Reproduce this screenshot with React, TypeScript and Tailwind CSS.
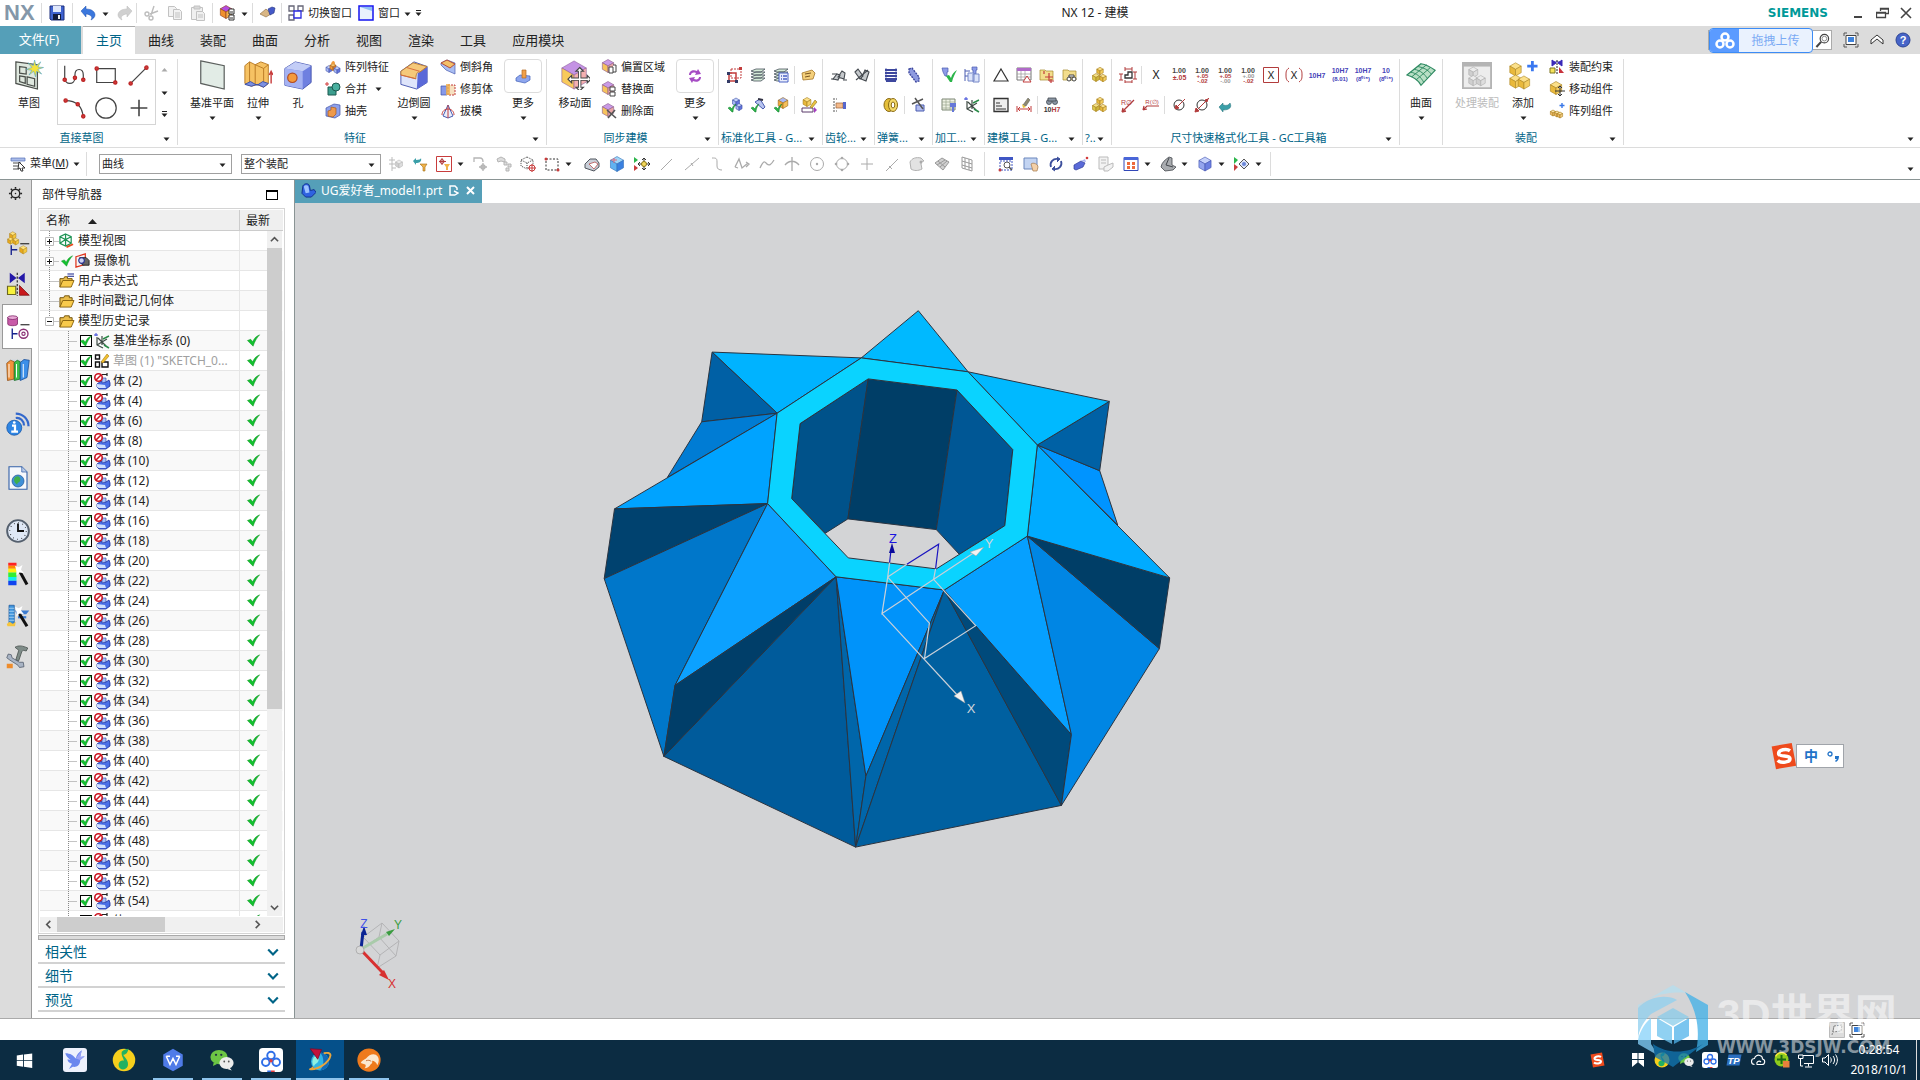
import React, { useState } from 'react';
import { clsx } from 'clsx';

type Dict = Record<string, React.ReactNode>;

/* ---------- drawing helpers ---------- */

function Cube({ x, y, s, c = ['#fbe08a', '#e9b93c', '#f4ce62'], k = '#a8801c' }: { x: number; y: number; s: number; c?: string[]; k?: string }) {
  const w = s * 0.87;
  const h = s / 2;
  return (
    <g transform={`translate(${x} ${y})`} stroke={k} strokeWidth="0.6" strokeLinejoin="round">
      <polygon points={`0,${-s} ${w},${-h} 0,0 ${-w},${-h}`} fill={c[0]} />
      <polygon points={`${-w},${-h} 0,0 0,${s} ${-w},${h}`} fill={c[1]} />
      <polygon points={`${w},${-h} 0,0 0,${s} ${w},${h}`} fill={c[2]} />
    </g>
  );
}

const BLUE = ['#c3d2fa', '#a7b7f3', '#6273dd'];
const PURPLE = ['#c99ae6', '#f6c35c', '#e9a6a6'];
const GREY = ['#ececec', '#cfcfcf', '#dedede'];
const GOLD = ['#ffe27a', '#e8a81c', '#f6c83c'];
const PEACH = ['#fbe0a0', '#efb968', '#f4ca80'];
const tick = <path d="M0.5 8 4.5 6.500l2.500 3C9 5 11 3 15.500 1 12 5 9.500 9 7.500 15Z" fill="#12c22e" stroke="#0b8a1f" strokeWidth="0.6" />;
const smallTick = <path d="m1 11 2-1 2 2c1-3 2-4 4-5-2 3-3 5-3 8L5 15z" fill="#2bb54a" stroke="#127a2c" strokeWidth="0.5" />;

const dimText = (a: string, b: string, c: string, color = '#b23c3c', color2 = color) => (
  <g fontFamily="Liberation Sans" fontSize="7" fontWeight="bold" textAnchor="middle">
    <text x="8" y="6" fill="#444">{a}</text>
    <text x="8.5" y={c ? 11 : 13} fontSize={c ? 6 : 7} fill={color}>{b}</text>
    <text x="8.5" y="16" fontSize="6" fill={color2}>{c}</text>
  </g>
);

const fitText = (a: string, b: string) => (
  <g fontFamily="Liberation Sans" fontSize="7" fontWeight="bold" textAnchor="middle" fill="#4543b8">
    <text x="8" y={b ? 6 : 11}>{a}</text>
    <text x="8" y="14" fontSize="6">{b}</text>
  </g>
);

/* 16 x 16 icons */
const small: Dict = {
  save: (<><path d="M1 1h14v14H2L1 14z" fill="#3e62cf" stroke="#1d2f7c" /><path d="M4 1h8v6H4z" fill="#dfe7fb" /><path d="M4 9h8v6H4z" fill="#111a3c" /><path d="M9 10h2v4H9z" fill="#eee" /></>),
  undo: <path d="M1 6 6 1v3c6 0 9 3 9 6 0 2-2 4-4 5 1-2 1-3 0-4S8 9 6 9v3z" fill="#3b77dd" stroke="#2353ae" strokeWidth="0.5" />,
  redo: <path d="m15 6-5-5v3c-6 0-9 3-9 6 0 2 2 4 4 5-1-2-1-3 0-4s3-2 5-2v3z" fill="#d0d0d0" stroke="#bbb" strokeWidth="0.5" />,
  cut: (<g stroke="#bdbdbd" fill="none" strokeWidth="1.4"><path d="m10 1-3 9M14 6 6 9" /><circle cx="3" cy="9" r="2" /><circle cx="7" cy="13" r="2" /></g>),
  copy: (<g stroke="#c2c2c2" fill="#f2f2f2"><path d="M1.5 1.5h6l2 2v8h-8z" /><path d="M6.5 4.5h6l2 2v8h-8z" /><path d="M8 8h5M8 10h5M8 12h5" /></g>),
  paste: (<g stroke="#c2c2c2" fill="#f0f0f0"><path d="M1.5 2.5h11v12h-11z" /><path d="M4 1h6v3H4z" fill="#d8d8d8" /><path d="M6.5 6.5h6l2 2v7h-8z" /><path d="M8 10h5M8 12h5" /></g>),
  repeat: (<><Cube x={7} y={7} s={6.5} c={['#b44ce0', '#f0902e', '#f4b04c']} k="#8a3a1c" /><path d="M10 4h5v5h-5zM10 10h5v5h-5z" fill="#fff" stroke="#333" /><path d="M11 7h3M11 13h3" stroke="#333" /></>),
  brush: (<><path d="M1 9 7 4l5 5-5 3z" fill="#d9b684" stroke="#8a6a3c" strokeWidth="0.6" /><path d="m9 4 4-2 3 1-1 5-4 2z" fill="#4459c8" stroke="#26347e" strokeWidth="0.6" /></>),
  switchWin: (<g fill="#fff" strokeWidth="1.3"><path d="M1 1h5v5H1zM10 1h5v5h-5zM1 10h5v5H1z" stroke="#667" /><path d="M6 6h7v7H6z" stroke="#2a2ae0" /></g>),
  win: (<><path d="M1 1h14v14H1z" fill="#e9f1fd" stroke="#1414f0" strokeWidth="1.5" /><path d="m2 2 12 0v4z" fill="#8fc0f4" /></>),
  pattern: (<><Cube x={4} y={10} s={3.5} c={BLUE} k="#4a5cb0" /><Cube x={8} y={8} s={3.5} c={['#f8c46a', '#ee9c3c', '#e07e22']} k="#a2601c" /><Cube x={12} y={11} s={3.5} c={BLUE} k="#4a5cb0" /><path d="M6 5c1-4 4-4 4 0" fill="#ee9c3c" /></>),
  unite: (<><path d="M3 6h8v8H3z" fill="#3c9e8e" stroke="#1d5a50" /><circle cx="11" cy="6" r="4" fill="#49b09f" stroke="#1d5a50" /><path d="M2 1v4M0 3h4" stroke="#d23b3b" /></>),
  shell: (<><path d="m1 5 8-4 6 1v10l-5 3-9-2z" fill="#8ea0ea" stroke="#3f53a8" strokeWidth="0.7" /><path d="m3 8 3-1V4l5 1v6l-3 3-5-1z" fill="#ee9a4c" stroke="#a85a1c" strokeWidth="0.7" /></>),
  chamfer: (<><path d="m1 4 6-3 8 3v11l-9-4-5-5z" fill="#a9bdf2" stroke="#4a5cb0" strokeWidth="0.7" /><path d="m1 4 6-3 8 4-5 4z" fill="#f3c069" stroke="#b54e3a" /></>),
  trim: (<><path d="M1 5h6v9H1z" fill="#8799e8" stroke="#3f53a8" strokeWidth="0.7" /><path d="M8 4h7v10H8z" fill="#f6e0c0" stroke="#c23c3c" strokeDasharray="2 1" /><path d="M6 3h4v11H6z" fill="#f0b04c" opacity="0.8" /></>),
  draft: (<><path d="m3 13 5-11 5 11-5 2z" fill="#e9eefb" stroke="#4a5cb0" /><path d="M8 2v13" stroke="#c23c3c" /><path d="M2 12C2 4 14 4 14 12" fill="none" stroke="#c23c3c" /></>),
  offset: (<><Cube x={7} y={7} s={6.5} c={PURPLE} k="#8a5a8c" /><path d="M8 8h4v6H8zM12 6h3v7h-3" fill="#fff" stroke="#444" /></>),
  replace: (<><Cube x={7} y={7} s={6.5} c={PURPLE} k="#8a5a8c" /><path d="M9 6h5v4H9zM9 11h5v4H9z" fill="#fff" stroke="#444" /></>),
  remove: (<><Cube x={7} y={7} s={6.5} c={PURPLE} k="#8a5a8c" /><path d="m6 7 9 8M14 7l-7 8" stroke="#555" strokeWidth="1.6" /></>),
  moreFeature: (<><path d="m1 10 4-3 10 1v4l-5 3-9-2z" fill="#8ea6ee" stroke="#3f5fb8" strokeWidth="0.7" /><path d="M7 2h4v8H7z" fill="#f0a04a" stroke="#b56a22" strokeWidth="0.7" /></>),
  moreSync: (<g fill="#a64cc4"><path d="M2 7c0-4 4-6 8-4l1-2 3 5-6 1 1-2C6 4 4 5 4 7z" /><path d="M14 9c0 4-4 6-8 4l-1 2-3-5 6-1-1 2c3 1 5 0 5-2z" /></g>),
  gcA: (<g fill="none"><path d="M4 2h10v9H4z" stroke="#c23c3c" strokeDasharray="2 1" /><path d="M2 6h7v8H2z" stroke="#c23c3c" strokeWidth="1.5" /><path d="M0 5h3v3H0zM0 13h3v3H0zM8 13h3v3H8z" fill="#333a66" /><path d="M12 0h3v3h-3z" fill="#c23c3c" /></g>),
  layers: (<g fill="#d5ebd8" stroke="#46505a" strokeWidth="0.8"><path d="m1 13 5-2h9l-4 3H4zM1 10l5-2h9l-4 3H4zM1 7l5-2h9l-4 3H4zM1 4l5-2h9l-4 3H4z" /></g>),
  layers2: (<><g fill="#d5ebd8" stroke="#46505a" strokeWidth="0.8"><path d="m1 13 5-2h9l-4 3H4zM1 10l5-2h9l-4 3H4zM1 7l5-2h9l-4 3H4zM1 4l5-2h9l-4 3H4z" /></g><path d="M6 6h9v9H6z" fill="#e9edfb" stroke="#4a62c4" /><path d="M8 9h1m1 0h4M8 12h1m1 0h4" stroke="#4a62c4" strokeWidth="1.3" /></>),
  tag: (<><path d="m1 6 10-3 3 3-2 6-10 1z" fill="#f4cf7a" stroke="#a5762a" strokeWidth="0.8" /><path d="m4 7 6-1M4 10l5-1" stroke="#7a5520" /></>),
  okBlue: (<><Cube x={9} y={5} s={4} c={BLUE} k="#3f53a8" /><Cube x={12} y={10} s={3.5} c={BLUE} k="#3f53a8" />{smallTick}</>),
  okPen: (<><path d="m5 5 5-3 5 8-2 2z" fill="#b8c4f0" stroke="#4a5cb0" /><path d="m8 2 5 1" stroke="#334" strokeWidth="2" />{smallTick}</>),
  okBox: (<><Cube x={10} y={6} s={5.5} c={['#aabaf4', '#f3a83c', '#f5c05a']} k="#9a6a1c" />{smallTick}</>),
  boxPen: (<><Cube x={6} y={5} s={4.5} /><path d="M1 11h11v4H1z" fill="#fff" stroke="#5b3a6b" /><path d="m9 10 5-7 2 2-5 6z" fill="#e9c23f" stroke="#7c5c10" strokeWidth="0.5" /><path d="m13 10 3 3-3 3z" fill="#a63ec0" /></>),
  gearA: (<g stroke="#454a50" strokeWidth="1.1" fill="#c5c9cc"><path d="m2 12 4-5 3 1-2 5zM7 10l4-6 3 2-1 6z" /><path d="M1 7h5M0 12h3M12 13h4" /></g>),
  gearB: (<g stroke="#454a50" strokeWidth="1.1" fill="#c5c9cc"><path d="m1 5 3-3 5 7-3 3zM7 12l4-9 4 2-3 9z" /><path d="M2 13 14 3" /></g>),
  gearHand: (<><path d="M2 2h4M2 5h3M2 8h4M2 11h3M2 14h4" stroke="#555" strokeDasharray="2 1" /><path d="M5 6h7v5H5z" fill="#f3b98a" stroke="#99623a" strokeWidth="0.7" /><path d="M12 5h3v7h-3z" fill="#5666cc" /></>),
  spring: (<g stroke="#3d479e" strokeWidth="2" fill="none"><path d="M2 3h12M2 6h12M2 9h12M2 12h12M3 14h10" /><path d="M3 1v13M13 1v13" strokeWidth="0.7" /></g>),
  springB: (<path d="m3 2 3-1 7 9v4l-3 1-7-9z" fill="#8f9be0" stroke="#3d479e" strokeWidth="1.4" strokeDasharray="2 1" />),
  ring: (<><ellipse cx="6" cy="8" rx="5" ry="6.5" fill="#e4bf3a" stroke="#8a6a14" /><ellipse cx="10" cy="8" rx="4.5" ry="6.5" fill="#f4d968" stroke="#8a6a14" /><ellipse cx="10" cy="8" rx="1.8" ry="3" fill="#fff" stroke="#8a6a14" /></>),
  cutSpring: (<><path d="M5 8h8v6H5z" fill="#b3bdf0" stroke="#4a5cb0" /><path d="m4 1 8 11M1 7l11-5" stroke="#555" strokeWidth="1.5" /></>),
  machine: (<><path d="M1 1h6v4H6v4H4L2 5z" fill="#8d9be8" stroke="#4a5cb0" strokeWidth="0.7" /><path d="m5 9 3-1 2 3c1-4 3-6 6-8-2 4-4 7-5 12H9z" fill="#2bb54a" /></>),
  machineB: (<><path d="M8 0h5v3h-1v4h-3V3H8z" fill="#8d9be8" stroke="#4a5cb0" strokeWidth="0.7" /><path d="M1 2v12M1 4h5M1 9h5" stroke="#4a5cb0" /><path d="M4 6h6v8H4zM9 7h6v8H9z" fill="#dce4fa" stroke="#7788c8" /></>),
  gridM: (<><path d="M1 2h13v11H1z" fill="#eef1e4" stroke="#7c8774" /><path d="M1 5h13M1 8h13M1 11h13M5 2v11M9 2v11" stroke="#9aa58c" strokeWidth="0.7" /><path d="M9 6h6v4h-2v5h-2v-5H9z" fill="#6678d8" /></>),
  csys: (<g fill="none" stroke="#3e4a44"><path d="M3 4v8l6 3M3 12l10-6M4 5l8 8M8 3v9" strokeWidth="1.2" /><path d="m9 6 6-3M10 12l5 3" stroke="#2a8a48" strokeWidth="1.5" /><path d="M2 0v3M0 2h4" stroke="#3a48d8" /></g>),
  triangle: <path d="M8 2 15 14H1z" fill="none" stroke="#333" strokeWidth="1.2" />,
  table: (<><path d="M1 1h14v12H1z" fill="#fff" stroke="#777" /><path d="M1 1h14v3H1z" fill="#b06ac8" /><path d="M1 7h14M1 10h14M5 4v9M9 4v9" stroke="#999" strokeWidth="0.7" /><path d="m11 9 4 6H7z" fill="#fff" stroke="#c23c3c" /></>),
  folderPlus: (<><path d="M1 3h5l1 1h7v9H1z" fill="#f3dd8c" stroke="#a5882a" strokeWidth="0.7" /><path d="M10 6v8M6 10h8M5 4v3M12 12v4M10 14h5" stroke="#c23c3c" strokeWidth="1.2" /></>),
  folderSee: (<><path d="M1 3h5l1 1h7v9H1z" fill="#f3dd8c" stroke="#a5882a" strokeWidth="0.7" /><g fill="#fff" stroke="#444"><circle cx="7" cy="12" r="2" /><circle cx="12" cy="12" r="2" /><path d="M7 8h5v2H7z" /></g></>),
  note: (<><path d="M1 1.5h14v13H1z" fill="#eee" stroke="#333" strokeWidth="1.3" /><path d="M3 6h4M3 9h6M3 12h10" stroke="#333" /></>),
  dimBrush: (<><path d="m7 8 5-7 2 2-4 6z" fill="#8e8a70" stroke="#555" strokeWidth="0.5" /><path d="m6 7 4 3-3 1z" fill="#e8c23c" /><path d="M1 9v6M15 9v6M2 12h12m-10-2-2 2 2 2m8-4 2 2-2 2" stroke="#c23c3c" fill="none" /></>),
  find: (<><g fill="#8a96a4" stroke="#444a52" strokeWidth="0.8"><circle cx="5" cy="5" r="2.5" /><circle cx="11" cy="5" r="2.5" /><path d="M4 1h8v3H4z" /></g><text x="8" y="15" textAnchor="middle" fontSize="7" fontWeight="bold" fontFamily="Liberation Sans" fill="#333">10<tspan fill="#b23c3c">H7</tspan></text></>),
  boxes: (<><Cube x={9} y={4} s={3.7} /><Cube x={5} y={10.5} s={4} c={['#f4e28a', '#d9c84a', '#cdb53c']} /><Cube x={12} y={11} s={3.7} /></>),
  dimA: (<g stroke="#b23c3c" fill="none"><path d="M5 2h7M5 0v4M12 0v4M1 7v6M-1 7h4M-1 13h4M15 5v7M13 5h4M13 12h4M5 15h7M5 13v3M12 13v3" /><path d="M5 11V8h3V5h4v6z" stroke="#333" strokeWidth="1.3" /></g>),
  x: (<text x="8" y="12" textAnchor="middle" fontSize="12" fontFamily="Noto Sans" fill="#222">X</text>),
  d1: dimText('1.00', '±.05', ''),
  d2: dimText('1.00', '+.05', '-.02'),
  d3: dimText('1.00', '+.05', '-.00', '#b23c3c', '#999'),
  d4: dimText('1.00', '+.00', '-.02', '#999', '#b23c3c'),
  xBox: (<><path d="M0.5 0.5h15v15h-15z" fill="none" stroke="#b23c3c" /><text x="8" y="12" textAnchor="middle" fontSize="11" fontFamily="Noto Sans" fill="#222">X</text></>),
  xParen: (<><path d="M3 1C0 3 0 5 0 8s0 5 3 7M13 1c3 2 3 4 3 7s0 5-3 7" fill="none" stroke="#b23c3c" /><text x="8" y="12" textAnchor="middle" fontSize="11" fontFamily="Noto Sans" fill="#222">X</text></>),
  f1: fitText('10H7', ''),
  f2: fitText('10H7', '(8.01)'),
  f3: fitText('10H7', '(8⁰¹⁵)'),
  f4: fitText('10', '(8⁰¹⁵)'),
  rad: (<><path d="m2 15 12-12M2 15l1-4M2 15l4-1" stroke="#b23c3c" strokeWidth="1.3" fill="none" /><text x="1" y="8" fontSize="7" fontFamily="Liberation Sans" fill="#b23c3c">R∅</text></>),
  rad2: (<><path d="m0 13 4-4h12M0 13l1-4M0 13l4-1" stroke="#b23c3c" strokeWidth="1.2" fill="none" /><text x="9" y="7" textAnchor="middle" fontSize="6" fontFamily="Liberation Sans" fill="#b23c3c">R(∅)</text></>),
  dia: (<><circle cx="8" cy="8" r="5" fill="none" stroke="#333" /><path d="m4 12 10-10M4 12l4-1-3-3z" stroke="#b23c3c" fill="#b23c3c" /></>),
  dia2: (<><circle cx="8" cy="8" r="5" fill="none" stroke="#333" /><path d="M1 15 15 1M1 15l4-1-3-3zM14 2l-3 1 2 2z" stroke="#b23c3c" fill="#b23c3c" /></>),
  back: (<path d="m2 10 4-4v2c4 1 6 0 7-2 2 4 0 7-7 7v2z" fill="#3a9fa8" stroke="#1f6a72" strokeWidth="0.5" />),
  constraint: (<><path d="M3 1v6l4-3zM13 1v6L9 4zM3 3h10" fill="#3a28b8" stroke="#3a28b8" /><path d="M8 1v14" stroke="#222" strokeDasharray="2 1" /><path d="M1 9h5v5H1z" fill="#f4e25c" stroke="#7d7420" /><path d="M10 8v6h5z" fill="#c8323c" /></>),
  moveComp: (<><Cube x={7} y={7} s={6.5} /><path d="M11 5v10M6 10h10M9 7l2-2 2 2M9 13l2 2 2-2" stroke="#333" fill="#fff" /></>),
  patComp: (<><Cube x={4} y={10} s={3} c={PEACH} /><Cube x={8} y={11} s={3} c={PEACH} /><Cube x={11} y={12} s={3} c={PEACH} /><path d="M13 0v5M10.500 2.500h5" stroke="#3a78e8" strokeWidth="1.4" /></>),
  menu: (<><path d="M1 2h14v3H1z" fill="#a9bbe8" stroke="#5570b8" strokeWidth="0.7" /><path d="M3 7h8M3 10h6M3 13h6" stroke="#888" strokeWidth="1.5" /><path d="m9 6 6 6-3 0 1 3-2 0-1-3-2 1z" fill="#fff" stroke="#333" /></>),
  t1: (<g stroke="#bbb" fill="#eee"><path d="M4 1v14M1 4h6M1 8h6M4 12h4" /><Cube x={11} y={8} s={4} c={GREY} k="#bbb" /></g>),
  t2: (<><path d="m1 5 3-3v2c3 0 5-1 5-2 1 4-2 5-5 5v2z" fill="#3a9fa8" /><path d="M8 8h7l-2 3v4h-2v-4z" fill="#f0b34a" stroke="#a36c14" strokeWidth="0.6" /></>),
  t3: (<><path d="M0.5 0.5h15v15h-15z" fill="#fff" stroke="#c83c3c" /><path d="M6 2v7M3 5.500h7" stroke="#b23c3c" /><circle cx="6" cy="5.5" r="2" fill="none" stroke="#b23c3c" /><path d="M8 8h6l-2 3v3h-2v-3z" fill="#f0b34a" /></>),
  t4: (<g stroke="#b5b5b5" fill="none" strokeWidth="1.3"><path d="M2 6V2h6c2 0 3 2 3 4" /><path d="M11 7v8M7 11h8" /><circle cx="11" cy="11" r="2" /></g>),
  t5: (<g stroke="#b5b5b5" fill="#ddd"><path d="M1 3 5 1l4 2v3L5 5 2 6z" /><path d="M8 6h3v3H8zM12 8h3v3h-3zM10 12h3v3h-3z" /></g>),
  t6: (<><path d="m7 1 6 3v6l-6 3-6-3V4zM1 4l6 3 6-3M7 7v6" fill="none" stroke="#444" strokeDasharray="1 1" /><circle cx="12" cy="12" r="3" fill="#fff" stroke="#c83c3c" /><path d="M12 8v8M8 12h8" stroke="#c83c3c" /></>),
  t7: (<><path d="M2 3h12v11H2z" fill="none" stroke="#333" strokeDasharray="2 1.5" /><circle cx="2" cy="3" r="1.5" fill="#c83c3c" /><circle cx="14" cy="14" r="1.5" fill="#c83c3c" /></>),
  t8: (<><path d="m1 8 5-5 6 0 3 4v4l-5 4-9-3z" fill="#c9cfd8" stroke="#50565e" /><path d="m5 8 6-2 3 2-4 5z" fill="#fff" stroke="#b23c3c" strokeWidth="0.7" /></>),
  t9: (<><Cube x={8} y={8} s={7.5} c={['#9fd6f8', '#62b2f0', '#3a80e0']} k="#3370b8" /><path d="M5 2v5M2 4h6" stroke="#e06a7a" /></>),
  t10: (<><path d="m0 1 4 3-4 3z" fill="#2bb54a" /><path d="m0 9 4 3-4 3z" fill="#c83c3c" /><path d="M10 2v12M4 8h12M8 4l2-2 2 2M8 12l2 2 2-2M6 6 4 8l2 2M14 6l2 2-2 2" stroke="#333" fill="none" /><circle cx="10" cy="8" r="2.5" fill="#f4d95c" stroke="#8a7414" /></>),
  t11: <path d="M2 14 13 3" stroke="#aaa" />,
  t12: <path d="M1 14 15 2M7 7l2 3" stroke="#aaa" />,
  t13: <path d="M3 2c4 0 5 0 5 4v4c0 3 2 4 5 4" stroke="#aaa" fill="none" />,
  t14: (<path d="M1 11 5 3l3 9 6-5M4 12l-3-1M12 6l3 2-3 3" stroke="#aaa" fill="none" strokeWidth="1.3" />),
  t15: <path d="M1 12c4-9 5-6 7-4s4 1 7-4" stroke="#aaa" fill="none" strokeWidth="1.3" />,
  t16: <path d="M1 9c4-5 10-5 14 0M8 1v14" stroke="#aaa" fill="none" strokeWidth="1.3" />,
  t17: (<><circle cx="8" cy="8" r="6.5" fill="none" stroke="#aaa" /><circle cx="8" cy="8" r="1.2" fill="#aaa" /></>),
  t18: (<><circle cx="8" cy="8" r="5.5" fill="none" stroke="#aaa" /><g fill="#aaa"><circle cx="8" cy="2" r="1.3" /><circle cx="8" cy="14" r="1.3" /><circle cx="2" cy="8" r="1.3" /><circle cx="14" cy="8" r="1.3" /></g></>),
  t19: <path d="M8 2v12M2 8h12" stroke="#aaa" />,
  t20: <path d="M2 15 14 3M5 10l3 3" stroke="#aaa" />,
  t21: (<><path d="M1 6c2-4 6-5 11-4l3 3c-2 0-3 1-3 3l1 5c-4 2-8 2-11 0z" fill="#e2e2e2" stroke="#b0b0b0" /><circle cx="12" cy="6" r="1.5" fill="#aaa" /></>),
  t22: (<g stroke="#9a9a9a" fill="#d0d0d0"><path d="m1 7 7-5 7 4-6 8z" /><path d="m3 9 8-5M6 11l7-6M4 5l7 6" /></g>),
  t23: (<path d="m3 1 10 3v11L3 12zM6 2v11M10 3v11M3 5l10 3M3 9l10 3" stroke="#9a9a9a" fill="none" />),
  v1: (<><path d="M1 1h14v3H1z" fill="#3f56c4" /><path d="M2 5h12v9H2z" fill="none" stroke="#3f56c4" strokeDasharray="2 1" /><circle cx="9" cy="9" r="3" fill="#fff" stroke="#555" /><path d="m11 11 3 3" stroke="#555" strokeWidth="1.5" /><circle cx="2" cy="14" r="1.5" fill="#c83c3c" /></>),
  v2: (<><path d="M1 2h13v11H1z" fill="#c3d4f2" stroke="#6a86bc" /><path d="M8 8c2-2 7 0 7 3l-1 4h-4z" fill="#f3d0a8" stroke="#a5784a" strokeWidth="0.7" /></>),
  v3: (<g fill="none" stroke="#3c4f9c" strokeWidth="1.8"><path d="M3 11a6 6 0 0 1 7-8M13 5a6 6 0 0 1-7 8" /><path d="m9 1 3 2-3 3M7 15l-3-2 3-3" fill="#3c4f9c" strokeWidth="1" /></g>),
  v4: (<><path d="m1 9 7-4 4 2-2 4-7 3-2-1z" fill="#5a6ad8" stroke="#2f3c98" strokeWidth="0.7" /><path d="m8 5 4-2 1 3" fill="#aab4f2" /><circle cx="14" cy="2" r="1.3" fill="#d23b3b" /></>),
  v5: (<g stroke="#bbb" fill="#f2f2f2"><path d="M1 1h9v12H1zM3 4h5M3 7h5" /><path d="m6 11 4-2 5-2v4l-5 4H6z" /></g>),
  v6: (<><path d="M1 1.500h14v13H1z" fill="#fff" stroke="#3248b8" /><path d="M1 1h14v3H1z" fill="#4a66d8" /><path d="M4 6h3v3H4zM9 6h3v3H9zM4 10h3v3H4zM9 10h3v3H9z" fill="#ee6a3c" /></>),
  v7: (<><path d="m9 1 3 1v7l4 2-3 3-8 1-4-4c1-5 4-7 8-10z" fill="#a9acb0" stroke="#44484d" strokeWidth="0.8" /><path d="M9 2 6 9l7 2" fill="none" stroke="#44484d" /></>),
  v8: <Cube x={8} y={8} s={7} c={['#c5d1fa', '#94a5ee', '#6c7fe0']} k="#4253b0" />,
  v9: (<><path d="m0 1 4 3-4 4z" fill="#2bb54a" /><path d="m0 8 4 3-4 4z" fill="#c83c3c" /><path d="m10 3 5 5-5 5-5-5z" fill="#dfe6f8" stroke="#555" /><circle cx="10" cy="8" r="2" fill="#6a86d8" /></>),
  tick,
  views: (<><path d="m7 1 6 3v7l-6 3-6-3V4zM1 4l6 3 6-3M7 7v7M7 1v6M1 11l6-4 6 4" fill="none" stroke="#1f9455" strokeWidth="1.3" /><path d="m8 15 7-3" stroke="#e84a1c" strokeWidth="2" /></>),
  camera: (<><path d="m1 4 10-3v11L1 15z" fill="#f4f4f4" stroke="#e0321c" strokeWidth="1.3" /><path d="M5 5h7l3 3v5H8z" fill="#666" stroke="#222" /><circle cx="7" cy="8" r="3" fill="#cdd3f4" stroke="#26308c" strokeWidth="1.2" /></>),
  folder: (<><path d="M1 5h4l1-2h5v2h3v4H5l-4 6z" fill="#e9bd4c" stroke="#6f5008" /><path d="M4 8h12l-3 7H1z" fill="#f8ca4c" stroke="#8a6410" /></>),
  folderExpr: (<><path d="M1 6h4l1-2h3v2h5v3H5l-4 6z" fill="#e9bd4c" stroke="#6f5008" /><path d="M4 8h12l-3 7H1z" fill="#f8ca4c" stroke="#8a6410" /><path d="M9 1h7M9 3.500h7" stroke="#16228c" strokeWidth="1.2" /></>),
  sketchNode: (<><g fill="#fff" stroke="#111" strokeWidth="1.4"><path d="M1.5 2h4v4h-4zM1.5 9h4v5h-4zM8 9h6v5H8z" /></g><path d="m7 9 6-8 2 2-6 7z" fill="#f0c030" stroke="#a87a10" strokeWidth="0.6" /></>),
  body: (<><path d="m3 11 4-3 5 1 3-2 1 3v3l-4 3H5l-2-2z" fill="#4a6fe6" stroke="#1c2c98" strokeWidth="0.8" /><path d="m3 11 8 1 1 3H5l-2-1z" fill="#cfe0ff" /><path d="M8 5h4v4l-4 1z" fill="#a8c2f8" stroke="#2336a0" strokeWidth="0.6" /><path d="M8 1.500h5M13 0v3" stroke="#222" strokeWidth="1.2" /><circle cx="4.5" cy="4.5" r="3.7" fill="#fff" stroke="#cc1420" strokeWidth="1.6" /><path d="M2 7 7 2" stroke="#cc1420" strokeWidth="1.6" /></>),
  lens: (<><circle cx="10" cy="6" r="4.500" fill="#fff" stroke="#444" strokeWidth="1.3" /><circle cx="10" cy="6" r="2.5" fill="none" stroke="#888" /><path d="m6.500 9.500-5 5.500" stroke="#444" strokeWidth="2.2" /></>),
  full: (<><path d="M1 4V1h3M12 1h3v3M15 12v3h-3M4 15H1v-3" fill="none" stroke="#555" /><path d="M3 3.500h10v9H3z" fill="#fff" stroke="#444" /><path d="M5 5h6v5H5z" fill="#3e82dc" /></>),
  up: <path d="m2 8 6-5 6 5v4L8 7l-6 5z" fill="#fff" stroke="#333" strokeLinejoin="round" />,
  help: (<><circle cx="8" cy="8" r="7" fill="#4664c8" stroke="#2c4494" /><text x="8" y="12" textAnchor="middle" fontSize="11" fontWeight="bold" fontFamily="Liberation Sans" fill="#fff">?</text></>),
  gear: (<><circle cx="8" cy="8" r="4.500" fill="none" stroke="#222" strokeWidth="1.4" /><path d="M8 1v2M8 13v2M1 8h2M13 8h2M3 3l1.500 1.500M11.500 11.500 13 13M3 13l1.500-1.500M11.500 4.500 13 3" stroke="#222" strokeWidth="1.6" /><circle cx="8" cy="8" r="0.8" fill="#222" /></>),
};

/* 32 x 32 icons: ribbon buttons, the resource bar and the task bar */
const big: Dict = {
  sketch: (<><path d="M2 2 25 5v26L2 25z" fill="#dfe8df" stroke="#4b4f4b" strokeWidth="1.3" /><path d="M6 7l7 1v7l-7-1zM6 17l6 1v7l-6-2zM14 18l8 2v8l-8-2z" fill="none" stroke="#4b4f4b" strokeWidth="1.3" /><path d="m22 0 1.500 6 5-4-3 5.500 6 .500-6 2 4 5-5.500-3-1 6-2-6-5 4 3-5-6-1 6-2-4-5 5.500 3z" fill="#f4e23c" stroke="#4aa0c8" strokeWidth="0.6" /></>),
  plane: <path d="m4 1 25 5v25L4 25z" fill="#e2ece6" stroke="#5c605e" strokeWidth="1.3" />,
  extrude: (<><path d="m2 6 5-4 6 3 6-3 8 3v20l-5 4-7-3-6 2-7-3z" fill="#f6c263" stroke="#b97a22" /><path d="M7 2v22M13 5v22M22 9v20M27 5 22 9 13 5" fill="none" stroke="#b97a22" /><path d="m2 26 6-3 7 4 6-4 6 2-5 4-7-3-6 2z" fill="#7c90e0" stroke="#3c50a8" /><path d="M30 25V13m-2 3 2-4 2 4" stroke="#c83c3c" strokeWidth="1.5" fill="none" /></>),
  hole: (<><path d="m2 9 11-7 17 4v18l-9 7-19-4z" fill="#6f80e0" stroke="#4656b0" /><path d="m2 9 11-7 17 4-9 6z" fill="#c3cdf6" /><path d="M2 9l19 3v19L2 27z" fill="#a5b2f2" /><circle cx="10" cy="19" r="5" fill="#f49a3c" stroke="#b24c22" strokeWidth="1.3" /></>),
  edge: (<><path d="m2 12 14-10 14 5v17l-11 7L2 26z" fill="#dfe5fb" stroke="#4656b0" /><path d="M20 14 30 7v17l-11 7z" fill="#5a69d8" /><path d="m2 12 13-9 15 4-8 6c-3-1-4 3-4 7L2 16z" fill="#f5c97a" stroke="#b97a32" /><path d="m8 8 14 4M2 16l16 4" stroke="#d8693c" fill="none" /></>),
  moveFace: (<><Cube x={15} y={16} s={15} c={['#c493e4', '#f8ca5c', '#f4b0b0']} k="#8a5a9c" /><path d="M21 11v19M11.500 20.500h19" stroke="#444" strokeWidth="3.5" /><path d="m21 8 4 4h-8zM21 33l4-4h-8zM8.500 20.500l4-4v8zM33 20.500l-4-4v8z" fill="#fff" stroke="#444" strokeWidth="1.2" /><path d="M21 11v19M11.500 20.500h19" stroke="#fff" strokeWidth="1.6" /></>),
  surface: (<><path d="m1 16 15-12c6 1 11 4 15 7L16 27c-3-6-8-9-15-11z" fill="#b8dfc5" stroke="#2f8a62" strokeWidth="1.3" /><path d="M5 13c6 1 11 5 14 11M9 10c6 1 11 5 14 10M13 7c6 1 11 4 14 8M6 18 22 5M11 21 26 8" fill="none" stroke="#2f8a62" /></>),
  asmDisabled: (<><path d="M1 3h30v27H1z" fill="#ededed" stroke="#b4b4b4" strokeWidth="2" /><path d="M1 3h30v4H1z" fill="#b4b4b4" /><Cube x={12} y={13} s={5.5} c={GREY} k="#aaa" /><Cube x={12} y={22} s={5.5} c={GREY} k="#aaa" /><Cube x={20} y={22} s={5.5} c={GREY} k="#aaa" /></>),
  add: (<><Cube x={8} y={10} s={7} /><Cube x={8} y={23} s={7} /><Cube x={17} y={24} s={7} /><path d="M26 1v11M20.500 6.500h11" stroke="#3a78f0" strokeWidth="3" /></>),
  navAsm: (<><Cube x={9} y={6} s={5} c={GOLD} /><Cube x={6} y={13} s={4.500} c={GOLD} /><Cube x={13} y={14} s={4.500} c={GOLD} /><path d="M19 17h12" stroke="#222" strokeWidth="1.5" /><path d="M7 19v13M7 25h8" stroke="#16228c" strokeWidth="1.8" /><Cube x={23} y={25} s={5.500} c={GOLD} /></>),
  navCon: (<><path d="M5 1v14l9-7zM25 1v14l-9-7z" fill="#2418a8" /><path d="M15 1v31" stroke="#222" strokeWidth="1.5" strokeDasharray="3 2" /><path d="M2 19h11v11H2z" fill="#f8f23c" stroke="#6c6820" strokeWidth="1.5" /><path d="M18 18v13h13z" fill="#c8181c" stroke="#7a1014" /></>),
  navPart: (<><path d="M1 3v9c0 3 13 3 13 0V3z" fill="#c85aa8" stroke="#7a1f62" /><ellipse cx="7.500" cy="3.500" rx="6.500" ry="2.500" fill="#e8a8d6" stroke="#7a1f62" /><path d="M18 13h12" stroke="#222" strokeWidth="1.5" /><path d="M7 18v14M7 25h7" stroke="#16228c" strokeWidth="1.8" /><circle cx="22" cy="25" r="6" fill="#fff" stroke="#8a2f74" strokeWidth="1.8" /><circle cx="22" cy="25" r="2.200" fill="#fff" stroke="#8a2f74" strokeWidth="1.5" /></>),
  books: (<><path d="m1 6 4-4h26l-3 24-3 4H2z" fill="#d0d8e0" /><path d="m1 7 5-4 5 2v23l-9 2z" fill="#f2933c" stroke="#8c4a10" /><path d="m11 6 4-3 4 2v23l-8 2z" fill="#3fbf4a" stroke="#1a6a26" /><path d="m19 6 5-4 7 1-3 23-9 4z" fill="#3c8fe8" stroke="#174a92" /><path d="M4 8v18M14 8v18M23 8v18" stroke="#fff" strokeWidth="1.3" /></>),
  info: (<><circle cx="11" cy="21" r="10" fill="#2f86e4" stroke="#1554a4" /><path d="M8 18h4v8M7 26h9" stroke="#fff" strokeWidth="3" fill="none" /><circle cx="11" cy="14" r="1.8" fill="#fff" /><path d="M13 8c6-1 11 4 11 10M13 2c9 0 17 7 17 17" stroke="#3368cc" strokeWidth="3" fill="none" /></>),
  web: (<><path d="M4 1h17l7 7v23H4z" fill="#f6f8fc" stroke="#3562a8" strokeWidth="1.5" /><path d="M21 1v7h7" fill="#b9cbe8" stroke="#3562a8" /><circle cx="16" cy="20" r="8" fill="#3f8fd8" stroke="#215a98" /><path d="M12 15c4-3 8 0 7 4s-4 2-4 6c-3-2-6-6-3-10z" fill="#3fae4c" /></>),
  clock: (<><circle cx="16" cy="16" r="14.500" fill="#dfe8f6" stroke="#55606e" strokeWidth="2.5" /><circle cx="16" cy="16" r="11" fill="none" stroke="#222" strokeWidth="1.5" strokeDasharray="1 4.760" /><path d="M16 6v10h8" stroke="#111" strokeWidth="2.5" fill="none" /></>),
  wand: (<><path d="M3 1h11v4H3z" fill="#f22" /><path d="M3 5h11v4H3z" fill="#f80" /><path d="M3 9h11v5H3z" fill="#fe1" /><path d="M3 14h11v6H3z" fill="#3e3" /><path d="M3 20h11v5H3z" fill="#1ee" /><path d="M3 25h11v6H3z" fill="#14e" /><path d="m17 10 11 20" stroke="#111" strokeWidth="4" /><path d="m12 5 5 2 5-3-2 6 4 5-6-1-4 4 0-6z" fill="#fff" /></>),
  wand2: (<><path d="M4 3h7v24H4z" fill="#3f94dc" stroke="#1e5a9c" /><path d="M4 7h7M4 11h7M4 15h7M4 19h7M4 23h7" stroke="#bfe0f8" /><path d="M12 10h19l-4 5H14z" fill="#3d7cd0" /><path d="M16 19h11" stroke="#3d7cd0" strokeWidth="3" /><path d="m1 28 4-3 4 3 4-3-1 6H2z" fill="#f6c53c" /><path d="m17 13 11 18" stroke="#111" strokeWidth="4" /><path d="m12 5 5 2 5-3-2 6 4 5-6-1-4 4 0-6z" fill="#fff" /></>),
  tools: (<><path d="M12 3c5-3 10-2 17 1l-2 4-4-1-2 2-4 12-4-1 4-13z" fill="#7f8c88" stroke="#444c4a" /><path d="m3 12 4 1 1 4 10 6 5 0 1 6-6 1-2-3-11-7-4-3z" fill="#a9b4c4" stroke="#4c5666" /><path d="M1 25h8v6H1z" fill="#ee8c2c" /></>),
  windows: <path d="M3 7.500 13.500 6v9.500H3zM15 5.800 29 4v11.500H15zM3 17h10.500v9.500L3 25zM15 17h14v11.500L15 26.600z" fill="#fff" />,
  bird: (<><rect width="32" height="32" rx="4" fill="#eef1fc" /><path d="M3 7c7 0 11 3 14 7 1-5 4-8 8-11l-2 9 6-1-6 5c0 7-5 10-10 9l-5 3 4-7c-4-1-6-3-6-6l4 1C6 13 4 10 3 7z" fill="#6a86ee" /><path d="m17 14 8-11-2 9 6-1-6 5z" fill="#9aa2f6" /></>),
  music: (<><circle cx="16" cy="16" r="15" fill="#f6cf1c" /><path d="M13 5c3-3 7-4 9-4-1 5-3 8-7 8 2 4 8 8 6 15-2 6-11 6-12 0-1-5 3-8 7-7-1-4-4-7-3-12z" fill="#23b161" /></>),
  wps: (<><path d="M16 1 29 8.500v15L16 31 3 23.500v-15z" fill="#4f7be8" /><path d="m7 11 5 11 4-8 4 8 5-11M7 11h5M20 11h5" fill="none" stroke="#fff" strokeWidth="2" /></>),
  wechat: (<><ellipse cx="12" cy="12" rx="11.500" ry="9.500" fill="#6cc644" /><path d="m5 19-1 5 6-3z" fill="#6cc644" /><circle cx="8" cy="9" r="1.500" fill="#234" /><circle cx="15" cy="9" r="1.500" fill="#234" /><ellipse cx="22" cy="20" rx="9.500" ry="8" fill="#ececec" /><path d="m26 26 3 4-6-2z" fill="#ececec" /><circle cx="19" cy="18" r="1.200" fill="#555" /><circle cx="25" cy="18" r="1.200" fill="#555" /></>),
  baidu: (<><rect width="32" height="32" rx="5" fill="#fff" /><g fill="none" stroke="#2f6fe8" strokeWidth="2.6"><circle cx="16" cy="10" r="5" /><circle cx="9" cy="19" r="5" /><circle cx="23" cy="19" r="5" /></g><circle cx="16" cy="17" r="2.200" fill="#e23c3c" /><path d="M11 30h5v2h-5z" fill="#2f6fe8" /><path d="M16 30h5v2h-5z" fill="#e23c3c" /></>),
  nx: (<><circle cx="16" cy="18" r="12" fill="#2fb4e4" /><path d="M16 6a12 12 0 0 1 0 24c6-6 6-18 0-24z" fill="#126ab8" /><path d="M8 12c4-3 8 0 6 5s-5 3-6 8c-3-4-3-9 0-13z" fill="#8ff0e0" /><path d="M2 28C12 30 28 20 30 10c0-4-5-4-9-3" fill="none" stroke="#e8a53c" strokeWidth="2.5" /><path d="m1 29 6-5 1 5z" fill="#e8a53c" /><path d="m3 1 15 1-5 13z" fill="#c2123c" stroke="#7c0a26" /></>),
  squirrel: (<><circle cx="16" cy="16" r="15.500" fill="#ee7a1c" /><path d="M5 20c1-3 4-4 7-6 4-5 9-7 13-5 5 3 5 9 2 14-1-4-4-6-7-6 1 2 0 4-2 5-1 3-5 5-8 5 2-2 2-4 1-5z" fill="#fbe8d0" /><path d="M12 17c3-1 5-1 7 1" stroke="#b5561a" fill="none" /></>),
  sogou: (<><path d="M3 5 26 1l5 26-23 4z" fill="#ee4a1c" /><path d="M24 10c-4-3-13-1-13 3 0 5 13 1 13 6 0 4-10 6-14 2" fill="none" stroke="#fff" strokeWidth="4" /></>),
  flag: <path d="M4 2h11v12H4zM17 2h11v12H17zM4 16h11v5L4 30zM17 16h11v14l-11-9z" fill="#fff" />,
  tp: (<><path d="M5 5h26l-4 22H1z" fill="#2b6fc0" /><text x="15" y="23" textAnchor="middle" fontSize="19" fontWeight="bold" fontStyle="italic" fontFamily="Liberation Sans" fill="#fff">TP</text></>),
  cloud: <path d="M9 25a6 6 0 0 1 0-12c1-5 6-8 11-6 4 1 5 5 5 7 7 2 5 11-1 11H14c-2-5 4-9 8-5" fill="none" stroke="#fff" strokeWidth="2.2" />,
  shield: (<><circle cx="15" cy="15" r="14" fill="#8ecb1c" /><path d="M15 6v18M6 15h18" stroke="#1c6a14" strokeWidth="4" /><path d="M18 18h13v13H18z" fill="#e8803c" /><path d="M3 9a13 13 0 0 1 22-3" stroke="#f8e83c" strokeWidth="3" fill="none" /></>),
  net: (<g fill="none" stroke="#fff" strokeWidth="2"><path d="M10 7h21v16H12M21 23v6M14 30h14" /><path d="M1 6h9v7H1zM5 13v15h5" /></g>),
  volume: (<g fill="none" stroke="#fff" strokeWidth="2"><path d="M1 12h5l7-7v22l-7-7H1z" /><path d="M17 11c2 3 2 7 0 10M22 8c4 5 4 11 0 16M27 5c5 7 5 15 0 22" /></g>),
};

function Icon({ n, s = 16 }: { n: string; s?: number }) {
  return (
    <svg width={s} height={s} viewBox="0 0 16 16" className="shrink-0 overflow-visible" aria-hidden="true">
      {small[n]}
    </svg>
  );
}

function BigIcon({ n, s = 30 }: { n: string; s?: number }) {
  return (
    <svg width={s} height={s} viewBox="0 0 32 32" className="shrink-0" aria-hidden="true">
      {big[n]}
    </svg>
  );
}

function Caret({ className, bar }: { className?: string; bar?: boolean }) {
  return (
    <svg width="7" height="7" viewBox="0 0 7 7" className={clsx('shrink-0', className)} aria-hidden="true">
      {bar && <path d="M1 0h5v1H1z" fill="#222" />}
      <path d="M0.500 2.500h6L3.500 6z" fill="currentColor" />
    </svg>
  );
}

const Sep = ({ className }: { className?: string }) => <span className={clsx('w-px shrink-0 bg-[#dcdcdc]', className)} />;

/* ---------- title bar and tabs ---------- */

function IconButton({ n, className }: { n: string; className?: string }) {
  return (
    <button type="button" aria-label={n} className={clsx('flex h-5 shrink-0 items-center justify-center', className ?? 'w-[23px]')}>
      <Icon n={n} />
    </button>
  );
}

function TitleBar() {
  return (
    <header className="flex h-[26px] items-center">
      <span className="w-[41px] pl-1 font-['Liberation_Sans',sans-serif] text-[22px] leading-[26px] font-bold text-[#8497a9]">NX</span>
      <Sep className="h-5" />
      <IconButton n="save" className="w-[30px]" />
      <Sep className="h-5" />
      <IconButton n="undo" className="w-[29px]" />
      <Caret className="mr-1" />
      <IconButton n="redo" />
      <Sep className="h-5" />
      <IconButton n="cut" className="w-[29px]" />
      <IconButton n="copy" className="w-[17px]" />
      <IconButton n="paste" className="w-[29px]" />
      <Sep className="h-5" />
      <IconButton n="repeat" className="w-[28px]" />
      <Caret className="mr-1" />
      <Sep className="h-5" />
      <IconButton n="brush" className="w-[28px]" />
      <Sep className="h-5" />
      <button type="button" className="flex items-center gap-1 pl-[6px]">
        <Icon n="switchWin" />
        切换窗口
      </button>
      <button type="button" className="ml-[6px] flex items-center gap-1">
        <Icon n="win" />
        窗口
        <Caret />
      </button>
      <Caret bar className="ml-1" />

      <h1 className="flex-1 text-center text-xs leading-[26px]">NX 12 - 建模</h1>

      <span className="mr-[18px] font-['DejaVu_Sans',sans-serif] text-xs leading-4 font-bold text-[#009999]">SIEMENS</span>
      <button type="button" aria-label="最小化" className="w-6">
        <svg width="10" height="12" viewBox="0 0 10 12" className="mx-auto"><path d="M1 10h8" stroke="#444" strokeWidth="2" /></svg>
      </button>
      <button type="button" aria-label="还原" className="w-6">
        <svg width="13" height="12" viewBox="0 0 13 12" className="mx-auto" fill="none" stroke="#444"><path d="M4.500 4V1.500h8v5H10M.500 5.500h9v5h-9zM.500 6h9M4.500 2h8" strokeWidth="1.3" /></svg>
      </button>
      <button type="button" aria-label="关闭" className="mr-[2px] w-6">
        <svg width="12" height="12" viewBox="0 0 12 12" className="mx-auto" stroke="#444" strokeWidth="1.6"><path d="m1 1 10 10M11 1 1 11" /></svg>
      </button>
    </header>
  );
}

const TABS = ['主页', '曲线', '装配', '曲面', '分析', '视图', '渲染', '工具', '应用模块'];

function TabBar() {
  const [active, setActive] = useState('主页');
  return (
    <nav className="flex h-7 bg-[#dcdcdc] text-[13px]">
      <button type="button" className="mr-[2px] w-[81px] bg-[#559fb8] pr-[3px] text-white">文件(F)</button>
      {TABS.map((tab) => (
        <button
          key={tab}
          type="button"
          onClick={() => setActive(tab)}
          className={clsx('border-t px-[13px]', tab === active ? 'border-[#aaa] bg-white text-[#006487]' : 'border-transparent')}
        >
          {tab}
        </button>
      ))}
      <div className="relative ml-auto flex items-center pr-1">
        <input aria-label="命令查找" className="h-5 w-[105px] border border-[#aaa] bg-white" />
        <button type="button" aria-label="搜索" className="flex h-5 w-[19px] items-center justify-center border border-l-0 border-[#aaa] bg-white">
          <Icon n="lens" s={15} />
        </button>
        <IconButton n="full" className="ml-[6px] w-[26px]" />
        <IconButton n="up" className="w-[26px]" />
        <IconButton n="help" className="w-[26px]" />
        <button type="button" className="absolute top-[2px] left-[1px] flex h-[25px] w-[104px] overflow-hidden rounded-sm border border-[#3c8cf6] bg-[#eaf2fe] text-xs leading-[23px] text-[#7aaaf4]">
          <span className="flex h-full w-[29px] items-center justify-center bg-[#5b9bff]">
            <svg width="20" height="18" viewBox="0 0 20 18" fill="none" stroke="#fff" strokeWidth="2.5"><circle cx="10" cy="5" r="3.500" /><circle cx="5" cy="12" r="3.500" /><circle cx="15" cy="12" r="3.500" /></svg>
          </span>
          <span className="flex-1 text-center">拖拽上传</span>
        </button>
      </div>
    </nav>
  );
}

/* ---------- ribbon ---------- */

function Group({ label, w, arrow = true, left, children }: { label?: string; w: string; arrow?: boolean; left?: boolean; children: React.ReactNode }) {
  return (
    <section className={clsx('flex h-[86px] shrink-0 flex-col border-r border-[#dcdcdc]', w)}>
      <div className="flex min-h-0 flex-1 items-start">{children}</div>
      <div className="flex h-[14px] items-center text-[#006487]">
        <span className={clsx('flex-1 leading-[14px] whitespace-nowrap', left ? 'pl-[2px]' : 'text-center')}>{label}</span>
        {arrow && <Caret className="mr-[7px] text-[#222]" />}
      </div>
    </section>
  );
}

function BigButton({ icon, label, w, arrow, disabled }: { icon: string; label: string; w: string; arrow?: boolean; disabled?: boolean }) {
  return (
    <button type="button" disabled={disabled} className={clsx('flex shrink-0 flex-col items-center pt-[1px] disabled:text-[#bbb]', w)}>
      <BigIcon n={icon} />
      <span className="leading-[26px] whitespace-nowrap">{label}</span>
      {arrow && <Caret className="-mt-[2px]" />}
    </button>
  );
}

function MoreButton({ icon }: { icon: string }) {
  return (
    <button type="button" className="flex w-[38px] shrink-0 flex-col items-center">
      <span className="flex h-[34px] w-full items-center justify-center rounded-sm border border-[#dcdcdc]"><Icon n={icon} /></span>
      <span className="leading-[20px]">更多</span>
      <Caret className="mt-px" />
    </button>
  );
}

function SmallList({ items, className }: { items: [string, string, boolean?][]; className?: string }) {
  return (
    <div className={clsx('flex shrink-0 flex-col', className)}>
      {items.map(([icon, label, arrow]) => (
        <button key={label} type="button" className="flex h-[22px] items-center gap-1 pb-[7px] leading-[14px] whitespace-nowrap">
          <Icon n={icon} />
          {label}
          {arrow && <Caret className="ml-1" />}
        </button>
      ))}
    </div>
  );
}

/* '|' stands for a thin divider inside a row */
function IconRows({ rows }: { rows: string[][] }) {
  return (
    <div className="pt-[1px] pl-1">
      {rows.map((row, i) => (
        <div key={i} className="flex h-[30px] items-center">
          {row.map((n, j) => (n === '|' ? <Sep key={j} className="mx-[2px] h-[18px]" /> : <IconButton key={j} n={n} />))}
        </div>
      ))}
    </div>
  );
}

const GALLERY: { name: string; draw: React.ReactNode; dots: number[][] }[] = [
  { name: '轮廓', draw: <path d="M4 3v13c0 8 11 8 11 0v-3c0-8 9-8 9 0v5" />, dots: [[4, 18], [15, 16], [24, 18]] },
  { name: '矩形', draw: <path d="M4 6h20v15H4z" />, dots: [[4, 6], [24, 21]] },
  { name: '直线', draw: <path d="M4 23 22 5" />, dots: [[5, 22], [22, 5]] },
  { name: '圆弧', draw: <path d="M5 6c12 0 18 7 19 18" />, dots: [[5, 6], [18, 10], [24, 23]] },
  { name: '圆', draw: <circle cx="14" cy="14" r="11" />, dots: [] },
  { name: '点', draw: <path d="M14 5v18M5 14h18" strokeWidth="1.7" />, dots: [] },
];

function Ribbon() {
  return (
    <div className="flex h-[94px] border-b border-[#dcdcdc] pt-[5px]">
      <Group label="直接草图" w="w-[178px]">
        <div className="w-[7px]" />
        <BigButton icon="sketch" label="草图" w="w-[44px]" />
        <div className="ml-[6px] grid h-[66px] w-[99px] grid-cols-3 border border-[#d5d5d5]">
          {GALLERY.map((g) => (
            <button key={g.name} type="button" aria-label={g.name} className="flex items-center justify-center">
              <svg width="26" height="26" viewBox="0 0 28 28" fill="none" stroke="#444" strokeWidth="1.3">
                {g.draw}
                {g.dots.map(([x, y], i) => <circle key={i} cx={x} cy={y} r="1.8" fill="#d23b3b" stroke="#b22" />)}
              </svg>
            </button>
          ))}
        </div>
        <div className="flex h-[66px] w-4 flex-col items-center justify-around">
          <Caret className="rotate-180 text-[#aaa]" />
          <Caret />
          <Caret bar />
        </div>
      </Group>

      <Group label="特征" w="w-[369px]">
        <div className="w-[9px]" />
        <BigButton icon="plane" label="基准平面" w="w-[50px]" arrow />
        <BigButton icon="extrude" label="拉伸" w="w-[42px]" arrow />
        <BigButton icon="hole" label="孔" w="w-[38px]" />
        <SmallList className="ml-2 w-[67px]" items={[['pattern', '阵列特征'], ['unite', '合并', true], ['shell', '抽壳']]} />
        <BigButton icon="edge" label="边倒圆" w="w-[44px]" arrow />
        <SmallList className="ml-1 w-[64px]" items={[['chamfer', '倒斜角'], ['trim', '修剪体'], ['draft', '拔模']]} />
        <MoreButton icon="moreFeature" />
      </Group>

      <Group label="同步建模" w="w-[172px]">
        <div className="w-[6px]" />
        <BigButton icon="moveFace" label="移动面" w="w-[44px]" />
        <SmallList className="ml-1 w-[75px]" items={[['offset', '偏置区域'], ['replace', '替换面'], ['remove', '删除面']]} />
        <MoreButton icon="moreSync" />
      </Group>

      <Group label="标准化工具 - G..." w="w-[104px]" left>
        <IconRows rows={[['gcA', 'layers', 'layers2', '|', 'tag'], ['okBlue', 'okPen', 'okBox', '|', 'boxPen']]} />
      </Group>
      <Group label="齿轮..." w="w-[52px]" left>
        <IconRows rows={[['gearA', 'gearB'], ['gearHand']]} />
      </Group>
      <Group label="弹簧..." w="w-[58px]" left>
        <IconRows rows={[['spring', 'springB'], ['ring', '|', 'cutSpring']]} />
      </Group>
      <Group label="加工..." w="w-[52px]" left>
        <IconRows rows={[['machine', 'machineB'], ['gridM', 'csys']]} />
      </Group>
      <Group label="建模工具 - G..." w="w-[98px]" left>
        <IconRows rows={[['triangle', 'table', 'folderPlus', 'folderSee'], ['note', 'dimBrush', '|', 'find']]} />
      </Group>
      <Group label="?.." w="w-[29px]" left>
        <IconRows rows={[['boxes'], ['boxes']]} />
      </Group>
      <Group label="尺寸快速格式化工具 - GC工具箱" w="w-[288px]">
        <IconRows
          rows={[
            ['dimA', '|', 'x', 'd1', 'd2', 'd3', 'd4', 'xBox', 'xParen', 'f1', 'f2', 'f3', 'f4'],
            ['rad', 'rad2', '|', 'dia', 'dia2', 'back'],
          ]}
        />
      </Group>
      <Group w="w-[43px]" arrow={false}>
        <BigButton icon="surface" label="曲面" w="w-[42px]" arrow />
      </Group>
      <Group label="装配" w="w-[181px]">
        <div className="w-[9px]" />
        <BigButton icon="asmDisabled" label="处理装配" w="w-[50px]" disabled />
        <BigButton icon="add" label="添加" w="w-[42px]" arrow />
        <SmallList className="ml-[5px]" items={[['constraint', '装配约束'], ['moveComp', '移动组件'], ['patComp', '阵列组件']]} />
      </Group>
      <button type="button" aria-label="功能区选项" className="mt-auto mr-[6px] mb-[5px] ml-auto"><Caret /></button>
    </div>
  );
}

/* ---------- selection bar ---------- */

function Picker({ label, value, w }: { label: string; value: string; w: string }) {
  return (
    <div className={clsx('relative shrink-0', w)}>
      <select aria-label={label} defaultValue={value} className="h-5 w-full appearance-none border border-[#a0a0a0] bg-white pl-[2px] leading-[18px]">
        <option>{value}</option>
      </select>
      <Caret className="pointer-events-none absolute top-[7px] right-[6px]" />
    </div>
  );
}

const SEL_ITEMS = ['t1', 't2', 't3', 'v', 't4', 't5', 't6', 't7', 'v', 't8', 't9', 't10', 't11', 't12', 't13', 't14', 't15', 't16', 't17', 't18', 't19', 't20', 't21', 't22', 't23'];
const VIEW_ITEMS = ['v1', 'v2', 'v3', 'v4', 'v5', 'v6', 'v', 'v7', 'v', 'v8', 'v', 'v9', 'v'];

function ToolStrip({ items, cell = 'w-[25px]' }: { items: string[]; cell?: string }) {
  return (
    <>
      {items.map((n, i) => (n === 'v' ? <span key={i} className="w-3"><Caret className="ml-px" /></span> : <IconButton key={i} n={n} className={cell} />))}
    </>
  );
}

function SelectionBar() {
  return (
    <div className="flex h-8 items-center border-b border-[#8a9494]">
      <button type="button" className="flex w-[86px] items-center pl-[10px]">
        <Icon n="menu" />
        <span className="mr-1 ml-1">菜单(<u>M</u>)</span>
        <Caret />
      </button>
      <Sep className="mr-3 h-6" />
      <Picker label="类型过滤器" value="曲线" w="w-[133px]" />
      <div className="w-[9px]" />
      <Picker label="选择范围" value="整个装配" w="w-[140px]" />
      <div className="w-[3px]" />
      <ToolStrip items={SEL_ITEMS.slice(0, 9)} cell="w-[24px]" />
      <div className="w-[3px]" />
      <ToolStrip items={SEL_ITEMS.slice(9)} />
      <Sep className="mr-2 ml-[5px] h-6" />
      <ToolStrip items={VIEW_ITEMS} />
      <Sep className="ml-1 h-6" />
      <button type="button" aria-label="工具条选项" className="mt-[10px] mr-[6px] ml-auto"><Caret /></button>
    </div>
  );
}

/* ---------- part navigator ---------- */

const RAIL: [string, string][] = [
  ['navAsm', 'mt-4 h-[40px]'],
  ['navCon', 'h-[41px]'],
  ['navPart', 'h-[45px] border border-r-0 border-[#999] bg-white'],
  ['books', 'h-[42px]'],
  ['info', 'mt-[6px] h-[54px]'],
  ['web', 'h-[54px]'],
  ['clock', 'h-[52px]'],
  ['wand', 'h-[33px]'],
  ['wand2', 'h-[50px]'],
  ['tools', 'h-[34px]'],
];

function Rail() {
  return (
    <aside className="flex w-8 shrink-0 flex-col border-r border-[#999] bg-[#dcdcdc]">
      <button type="button" aria-label="资源条选项" className="flex h-[27px] items-center justify-center"><Icon n="gear" s={15} /></button>
      {RAIL.map(([n, cls]) => (
        <button key={n} type="button" aria-label={n} className={clsx('-mr-px ml-[2px] flex items-center pl-1', cls)}>
          <BigIcon n={n} s={24} />
        </button>
      ))}
    </aside>
  );
}

function Branch({ level, expander, last }: { level: number; expander?: string; last?: boolean }) {
  const w = level ? 40 : 19;
  const x = level ? 28.5 : 9.5;
  return (
    <svg width={w} height="20" viewBox={`0 0 ${w} 20`} className="shrink-0" aria-hidden="true">
      <path d={`M${x} 0V${last ? 10 : 20}M${x} 10.5H${level ? 37 : 19}`} stroke="#888" strokeDasharray="1 1" />
      {expander && (
        <>
          <path d="M5.500 6.500h8v8h-8z" fill="#fff" stroke="#bbb" />
          <path d={expander === '+' ? 'M7 10.500h5M9.500 8v5' : 'M7 10.500h5'} stroke="#111" />
        </>
      )}
    </svg>
  );
}

type Row = { label: string; icon: string; level: number; expander?: string; mark?: boolean; dim?: boolean; last?: boolean };

const ROWS: Row[] = [
  { label: '模型视图', icon: 'views', level: 0, expander: '+' },
  { label: '摄像机', icon: 'camera', level: 0, expander: '+', mark: true },
  { label: '用户表达式', icon: 'folderExpr', level: 0 },
  { label: '非时间戳记几何体', icon: 'folder', level: 0 },
  { label: '模型历史记录', icon: 'folder', level: 0, expander: '-', last: true },
  { label: '基准坐标系 (0)', icon: 'csys', level: 1 },
  { label: '草图 (1) "SKETCH_0...', icon: 'sketchNode', level: 1, dim: true },
  ...Array.from({ length: 28 }, (_, i) => ({ label: `体 (${i * 2 + 2})`, icon: 'body', level: 1 })),
];

function TreeRow({ row }: { row: Row }) {
  return (
    <tr className="even:bg-[#f9f9f9]">
      <td className="h-5 border-r border-b border-[#e6e6e6] p-0">
        <div className="flex h-[19px] items-center overflow-hidden whitespace-nowrap">
          <Branch level={row.level} expander={row.expander} last={row.last} />
          {row.mark && <span className="mr-[2px] ml-[2px] flex"><Icon n="tick" s={12} /></span>}
          {row.level === 1 ? (
            <label className="flex items-center">
              <span className="relative mr-[2px]">
                <input type="checkbox" defaultChecked className="block size-3 appearance-none border border-black bg-white" />
                <span className="pointer-events-none absolute top-0 left-0"><Icon n="tick" s={12} /></span>
              </span>
              <Icon n={row.icon} />
              <span className={clsx('ml-[3px]', row.dim && 'text-[#a0a0a0]')}>{row.label}</span>
            </label>
          ) : (
            <>
              <Icon n={row.icon} s={15} />
              <span className="ml-1">{row.label}</span>
            </>
          )}
        </div>
      </td>
      <td className="h-5 border-b border-[#e6e6e6] p-0 pl-[7px]">{row.level === 1 && <Icon n="tick" s={13} />}</td>
      <td className="p-0" />
    </tr>
  );
}

function Chevron({ dir, color = '#555', s = 9 }: { dir: string; color?: string; s?: number }) {
  const d: Record<string, string> = { up: 'm1 7 4-4 4 4', down: 'm1 3 4 4 4-4', left: 'm7 1-4 4 4 4', right: 'm3 1 4 4-4 4' };
  return (
    <svg width={s} height={s} viewBox="0 0 10 10" fill="none" stroke={color} strokeWidth="1.8" aria-hidden="true">
      <path d={d[dir]} />
    </svg>
  );
}

function Navigator() {
  return (
    <div className="flex w-[263px] shrink-0 flex-col border-r border-[#8a9494] pr-[9px] pl-[6px]">
      <div className="flex h-7 items-center justify-between pt-[2px] pr-[7px] pl-1 text-xs">
        <h2>部件导航器</h2>
        <button type="button" aria-label="浮动" className="h-[10px] w-3 border border-t-2 border-black" />
      </div>

      <div className="flex min-h-0 flex-1 flex-col border border-[#d4d4d4] p-px">
        <div className="relative min-h-0 flex-1 overflow-hidden">
          <table className="w-full table-fixed border-separate border-spacing-0 text-xs leading-[19px]">
            <colgroup>
              <col />
              <col className="w-[27px]" />
              <col className="w-4" />
            </colgroup>
            <thead className="bg-[#efefef]">
              <tr>
                <th className="h-[21px] border-r border-b border-[#ccc] p-0 pl-[6px] text-left font-normal">
                  名称
                  <svg width="9" height="5" viewBox="0 0 9 5" className="ml-[18px] inline-block align-middle"><path d="M0 5 4.500 0 9 5z" fill="#222" /></svg>
                </th>
                <th colSpan={2} className="border-b border-[#ccc] p-0 pl-[6px] text-left font-normal">最新</th>
              </tr>
            </thead>
            <tbody>
              {ROWS.map((row) => <TreeRow key={row.label} row={row} />)}
            </tbody>
          </table>
          <div className="absolute top-[21px] right-px bottom-0 flex w-[15px] flex-col items-center bg-[#f0f0f0]">
            <button type="button" aria-label="向上滚动" className="flex h-[17px] items-center"><Chevron dir="up" /></button>
            <div className="w-full grow-[461] bg-[#cdcdcd]" />
            <div className="grow-[190]" />
            <button type="button" aria-label="向下滚动" className="flex h-[17px] items-center"><Chevron dir="down" /></button>
          </div>
        </div>
        <div className="flex h-4 items-center border-t border-white bg-[#f0f0f0]">
          <button type="button" aria-label="向左滚动" className="flex w-[17px] justify-center"><Chevron dir="left" /></button>
          <div className="h-full w-[108px] bg-[#cdcdcd]" />
          <button type="button" aria-label="向右滚动" className="mr-[21px] ml-auto flex justify-center"><Chevron dir="right" /></button>
        </div>
      </div>

      <div className="mt-px h-[5px] border border-[#aaa] bg-[#dcdcdc]" />
      {['相关性', '细节', '预览'].map((s) => (
        <button key={s} type="button" className="flex h-6 items-center justify-between border-b-2 border-[#d2d2d2] pt-[2px] pr-[6px] pl-[7px] text-sm leading-[20px] text-[#006487]">
          {s}
          <Chevron dir="down" color="#006487" s={12} />
        </button>
      ))}
      <div className="h-[6px]" />
    </div>
  );
}

/* ---------- graphics window ---------- */

const FACES: [string, string][] = [
  ['861.3,357.9 918.3,310.7 968.1,371.8', '#00b9ff'],
  ['861.3,357.9 712.1,352.1 777.1,413.2', '#00b3ff'],
  ['712.1,352.1 777.1,413.2 701.7,421.8', '#0060a5'],
  ['777.1,413.2 701.7,421.8 667.3,477.5', '#007cd4'],
  ['777.1,413.2 614.5,508.9 767.6,503.6', '#00a3ff'],
  ['614.5,508.9 767.6,503.6 604.2,578.6', '#00426f'],
  ['767.6,503.6 604.2,578.6 663.9,756.4 675,685.4', '#0077ca'],
  ['767.6,503.6 675,685.4 836.1,576.8', '#0ca1ff'],
  ['675,685.4 663.9,756.4 836.1,576.8', '#003e69'],
  ['836.1,576.8 663.9,756.4 855.6,847.1', '#005b9b'],
  ['836.1,576.8 855.6,847.1 865.9,776.1', '#0066aa'],
  ['836.1,576.8 865.9,776.1 944.3,590', '#0093fa'],
  ['944.3,590 865.9,776.1 855.6,847.1', '#0066aa'],
  ['944.3,590 855.6,847.1 1061.4,805.4', '#0060a0'],
  ['944.3,590 1061.4,805.4 1071.4,734.6', '#004a7b'],
  ['944.3,590 1071.4,734.6 1027.4,536.1', '#06a0ff'],
  ['1027.4,536.1 1071.4,734.6 1061.4,805.4 1159.4,648.6', '#0086e4'],
  ['1027.4,536.1 1159.4,648.6 1169.7,577.9', '#003e67'],
  ['1037.3,445 1099.7,470.7 1117.7,525', '#0094ff'],
  ['1037.3,445 1027.4,536.1 1169.7,577.9', '#00abff'],
  ['1037.3,445 1109.3,401.4 1099.7,470.7', '#0061a5'],
  ['968.1,371.8 1109.3,401.4 1037.3,445', '#00b9ff'],
];

const RING_OUT = 'M861.3 357.9 968.1 371.8 1037.3 445 1027.4 536.1 944.3 590 836.1 576.8 767.6 503.6 777.1 413.2Z';
const RING_IN = 'M868.2 378.9 957 390 1012.8 449.6 1004.8 525.7 936.3 568.9 848.3 557.9 791.7 498.6 800.1 423.6Z';

function Model() {
  return (
    <svg viewBox="295 203 1625 815" className="absolute inset-0 size-full" aria-label="模型">
      <g stroke="#2b3440" strokeWidth="1" strokeLinejoin="round">
        {FACES.map(([points, fill]) => <polygon key={points} points={points} fill={fill} />)}
        {/* bore walls seen through the opening */}
        <polygon points="868.2,378.9 800.1,423.6 791.7,498.6 825.3,533.2 847.9,518.9" fill="#00528a" />
        <polygon points="868.2,378.9 957,390 936.3,529.6 847.9,518.9" fill="#003e67" />
        <polygon points="957,390 1012.8,449.6 1004.8,525.7 959.3,554.3 936.3,529.6" fill="#005795" />
        <path d={`${RING_OUT}${RING_IN}`} fill="#0ad3ff" fillRule="evenodd" />
      </g>
      {/* datum coordinate system */}
      <g fill="none" stroke="#c9d0d8" strokeWidth="1.2">
        <path d="M889.6 562.5 887.7 577.1 882 613.6 975 552M882 613.6 960 698M887.7 577.1 906.9 564.3M935.6 568.6 933.6 579.3 975.7 625.7 924.5 658.6 929.4 623.2 887.7 577.1" />
        <path d="M889.6 562.5 891 550M906.9 564.3 938.6 544.3 935.6 568.6" stroke="#1a14c0" />
      </g>
      <path d="m892 543 3 10h-6z" fill="#0a0a9c" />
      <path d="m984 547-8 9-6-4zM965 703l-4-12-7 5z" fill="#f2f2f2" stroke="#999" strokeWidth="0.5" />
      <g fontFamily="Liberation Sans" fontSize="13" textAnchor="middle">
        <text x="893" y="543" fill="#1a14e0">Z</text>
        <text x="989" y="548" fill="#d0d6dc">Y</text>
        <text x="971" y="713" fill="#d0d6dc">X</text>
      </g>
    </svg>
  );
}

function Triad() {
  return (
    <svg width="60" height="76" viewBox="350 915 60 76" className="absolute bottom-[27px] left-[55px]" aria-label="视图三重轴">
      <path d="m362 938 20-15 17 18-3 15-19 12-17-18M364 938l16 17 19-14M380 955l-3 13M382 923l-3 14 17 19M379 937l-18 13" fill="none" stroke="#b4b4b6" />
      <path d="M361 949 363 932" stroke="#0a2494" strokeWidth="3" />
      <path d="m364 926 3 9h-6z" fill="#0a2494" />
      <path d="m363 948 24-14" stroke="#a9cbaa" strokeWidth="3" />
      <path d="m395 929-6 7-3-4z" fill="#3a9c40" />
      <path d="m362 951 21 22" stroke="#d83030" strokeWidth="3" />
      <path d="m389 980-10-5 5-5z" fill="#d83030" />
      <circle cx="360" cy="950" r="4" fill="#d8d8d8" stroke="#888" strokeWidth="0.5" />
      <g fontFamily="Liberation Sans" fontSize="12" textAnchor="middle">
        <text x="364" y="928" fill="#3f50e8">Z</text>
        <text x="398" y="929" fill="#3a9c40">Y</text>
        <text x="392" y="988" fill="#d83030">X</text>
      </g>
    </svg>
  );
}

function GraphicsWindow() {
  return (
    <main className="flex min-w-0 flex-1 flex-col">
      <div className="flex h-[23px]">
        <div className="flex w-[187px] items-center bg-[#559fb8] pb-[2px] pl-[6px] text-xs text-white">
          <svg width="15" height="15" viewBox="0 0 16 16" className="shrink-0"><path d="M2 3c2-3 6-3 7 0l1 5 4-1 2 3-5 5H5l-4-4z" fill="#2f62e0" stroke="#12308c" /><path d="M3 4c1-2 4-2 5 0l1 6-4 1z" fill="#9cc2ff" /></svg>
          <span className="mr-[7px] ml-[5px] whitespace-nowrap">UG爱好者_model1.prt</span>
          <svg width="10" height="11" viewBox="0 0 10 11" fill="none" stroke="#fff" strokeWidth="1.5"><path d="M6 10H1V1h5l2 2v2M5 6l4 2-3 2" /></svg>
          <button type="button" aria-label="关闭部件" className="ml-[7px]">
            <svg width="9" height="9" viewBox="0 0 9 9" stroke="#fff" strokeWidth="2"><path d="m1 1 7 7M8 1 1 8" /></svg>
          </button>
        </div>
      </div>
      <div className="relative flex-1 bg-[#d3d4d6]">
        <Model />
        <Triad />
        {/* floating input method bar */}
        <div className="absolute top-[539px] right-[76px] flex items-center">
          <span className="z-10 -mr-px"><BigIcon n="sogou" s={28} /></span>
          <span className="flex h-6 w-[48px] items-center gap-[9px] border border-[#a0a4aa] bg-white pl-[7px] text-sm leading-[22px] font-bold text-[#2273c8]">
            中
            <svg width="12" height="12" viewBox="0 0 12 12"><circle cx="3" cy="4" r="2" fill="none" stroke="#2273c8" strokeWidth="1.3" /><path d="M8 6h4c0 3-1 5-3 6l-1-1 2-2H8z" fill="#2273c8" /></svg>
          </span>
        </div>
      </div>
    </main>
  );
}

/* ---------- task bar ---------- */

const TASKS: [string, boolean, boolean][] = [
  ['bird', false, false],
  ['music', false, false],
  ['wps', true, false],
  ['wechat', true, false],
  ['baidu', true, false],
  ['nx', true, true],
  ['squirrel', true, false],
];

function TaskBar() {
  return (
    <footer className="flex h-10 items-center bg-[#0c2c42] text-white">
      <button type="button" aria-label="开始" className="mr-[3px] flex h-10 w-12 items-center justify-center"><BigIcon n="windows" s={19} /></button>
      {TASKS.map(([n, running, active]) => (
        <button key={n} type="button" aria-label={n} className={clsx('relative mr-px flex h-10 w-12 items-center justify-center', active && 'bg-[#05508a]')}>
          <BigIcon n={n} s={24} />
          {running && <span className={clsx('absolute bottom-0 h-[2px] bg-[#8fc4ec]', active ? 'inset-x-0' : 'inset-x-1')} />}
        </button>
      ))}
      <div className="ml-auto flex items-center">
        <span className="mr-[21px]"><BigIcon n="sogou" s={16} /></span>
        {['flag', 'music', 'wechat', 'baidu', 'tp', 'cloud', 'shield', 'net', 'volume'].map((n) => (
          <button key={n} type="button" aria-label={n} className="flex w-6 justify-center"><BigIcon n={n} s={16} /></button>
        ))}
        <div className="w-[74px] text-center text-xs leading-[20px]">
          <div>0:28:54</div>
          <div>2018/10/1</div>
        </div>
        <Sep className="mr-[3px] h-10 bg-[#4b6272]" />
      </div>
    </footer>
  );
}

function Watermark() {
  return (
    <div className="pointer-events-none absolute right-[16px] bottom-[12px] flex items-start gap-2 text-white">
      <svg width="72" height="84" viewBox="0 0 72 84" opacity="0.75">
        <path d="M36 1 50 9c-16-2-40 2-49 15v-3z" fill="#b5dff0" />
        <path d="M1 24C12 12 30 10 40 16L14 30C6 38 2 46 1 54z" fill="#8fd0f0" />
        <path d="M48 8 71 21v40l-12 7c4-20 2-40-11-60z" fill="#3fb0e8" />
        <path d="M1 56c2-10 8-18 13-22v26l8 12-21-12z" fill="#86d2fa" />
        <path d="M16 60c14 10 34 10 50 0l-30 23-18-10z" fill="#1277b4" />
        <path d="m36 24 16 9-16 9-16-9z" fill="#8acdea" />
        <path d="m20 34 15 9v17l-15-8z" fill="#6cc2ee" />
        <path d="m52 34-15 9v17l15-8z" fill="#4fb2ea" />
      </svg>
      <div className="w-[187px] pt-[8px] font-['Liberation_Sans','Noto_Sans_CJK_SC',sans-serif] font-bold whitespace-nowrap">
        <div className="text-[42px] leading-[46px] text-white/50">3D世界网</div>
        <div className="font-['DejaVu_Sans',sans-serif] text-[17px] leading-[18px] text-white/50">WWW.3DSJW.COM</div>
      </div>
    </div>
  );
}

export default function App() {
  return (
    <div className="relative flex h-screen flex-col overflow-hidden bg-white font-['Noto_Sans','Noto_Sans_CJK_SC',sans-serif] text-[11px] text-[#222]">
      <TitleBar />
      <TabBar />
      <Ribbon />
      <SelectionBar />
      <div className="flex min-h-0 flex-1 border-b border-[#aaa]">
        <Rail />
        <Navigator />
        <GraphicsWindow />
      </div>
      <div className="flex h-[21px] items-center justify-end gap-1 pr-[55px]">
        <svg width="16" height="16" viewBox="0 0 16 16"><path d="M0.500 0.500h15v15H.500z" fill="#ddd" stroke="#bbb" /><path d="m3 13 2-9M5 4l8-1-1 6-8 1z" stroke="#888" fill="#eee" strokeDasharray="2 1" /></svg>
        <Icon n="full" />
      </div>
      <TaskBar />
      <Watermark />
    </div>
  );
}
